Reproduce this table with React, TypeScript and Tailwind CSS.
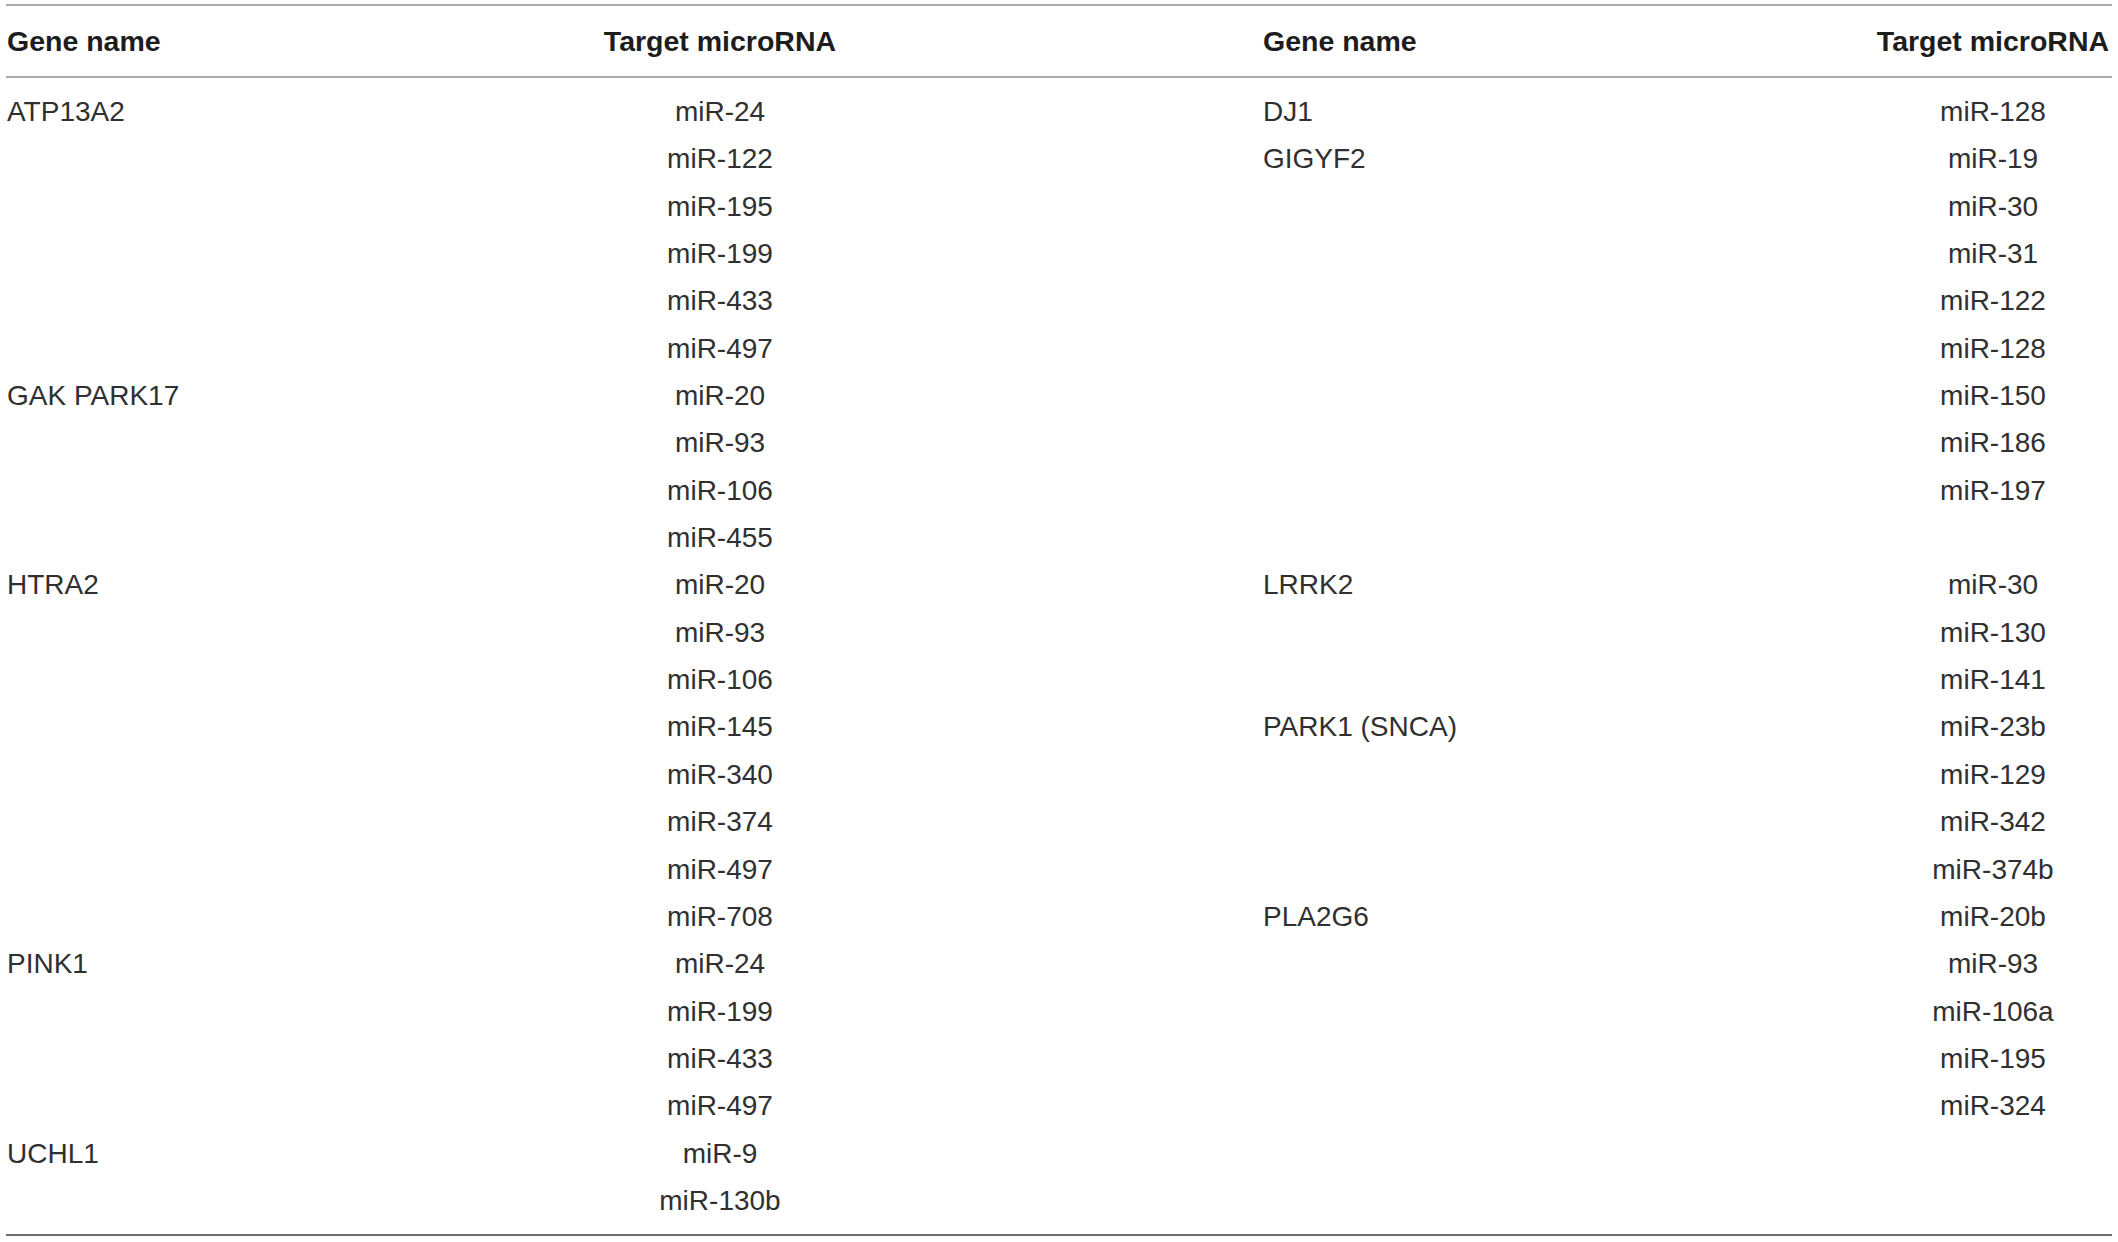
import React from 'react';

type Row = [string, string, string, string];

const left: [string, string[]][] = [
  ['ATP13A2', ['miR-24', 'miR-122', 'miR-195', 'miR-199', 'miR-433', 'miR-497']],
  ['GAK PARK17', ['miR-20', 'miR-93', 'miR-106', 'miR-455']],
  ['HTRA2', ['miR-20', 'miR-93', 'miR-106', 'miR-145', 'miR-340', 'miR-374', 'miR-497', 'miR-708']],
  ['PINK1', ['miR-24', 'miR-199', 'miR-433', 'miR-497']],
  ['UCHL1', ['miR-9', 'miR-130b']],
];

const right: [string, string[]][] = [
  ['DJ1', ['miR-128']],
  ['GIGYF2', ['miR-19', 'miR-30', 'miR-31', 'miR-122', 'miR-128', 'miR-150', 'miR-186', 'miR-197', '']],
  ['LRRK2', ['miR-30', 'miR-130', 'miR-141']],
  ['PARK1 (SNCA)', ['miR-23b', 'miR-129', 'miR-342', 'miR-374b']],
  ['PLA2G6', ['miR-20b', 'miR-93', 'miR-106a', 'miR-195', 'miR-324']],
];

const flatten = (groups: [string, string[]][]) =>
  groups.flatMap(([gene, mirs]) => mirs.map((m, i) => [i === 0 ? gene : '', m] as [string, string]));

const l = flatten(left);
const r = flatten(right);
const rows: Row[] = l.map((x, i) => [x[0], x[1], r[i]?.[0] ?? '', r[i]?.[1] ?? '']);

const grid = 'grid grid-cols-[177px_1074px_617px_238px]';

const App: React.FC = () => {
  return (
    <div className="min-h-screen bg-white pt-[4px] pl-[6px] font-['Liberation_Sans',Arial,sans-serif] text-[#303030]">
      <div className="w-[2106px] border-t-[2px] border-b-[2px] border-t-[#a8a8a8] border-b-[#6e6e6e]">
        {/* header */}
        <div className={`${grid} border-b-[2px] border-[#a8a8a8] pt-[15px] pb-[15px] text-[28.5px] font-bold leading-[40px] text-[#1d1d1d]`}>
          <div className="pl-[1px] whitespace-nowrap">Gene name</div>
          <div className="text-center whitespace-nowrap">Target microRNA</div>
          <div className="pl-[6px] whitespace-nowrap">Gene name</div>
          <div className="text-center whitespace-nowrap">Target microRNA</div>
        </div>

        {/* body */}
        <div className="pt-[10px] pb-[10px] text-[28px] leading-[47.35px]">
          {rows.map((row, i) => (
            <div key={i} className={`${grid} h-[47.35px]`}>
              <div className="pl-[1px] whitespace-nowrap">{row[0]}</div>
              <div className="text-center whitespace-nowrap">{row[1]}</div>
              <div className="pl-[6px] whitespace-nowrap">{row[2]}</div>
              <div className="text-center whitespace-nowrap">{row[3]}</div>
            </div>
          ))}
        </div>
      </div>
    </div>
  );
};

export default App;
